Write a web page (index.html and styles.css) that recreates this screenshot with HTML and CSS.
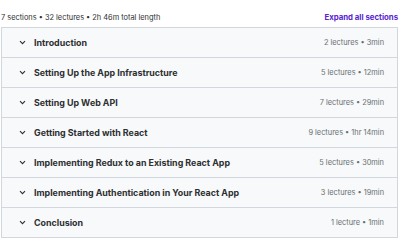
FILE: index.html
```html
<!DOCTYPE html>
<html lang="en">
<head>
    <meta charset="UTF-8">
    <title>Course content</title>
    <link rel="stylesheet" href="styles.css">
</head>
<body>
    <div class="curriculum">
        <div class="summary">
            <span class="stats">7 sections • 32 lectures • 2h 46m total length</span>
            <button class="expand">Expand all sections</button>
        </div>
        <div class="sections">
            <div class="section">
                <span class="chevron"><svg width="7" height="5" viewBox="0 0 7 5"><path d="M1 1.2l2.5 2.5 2.5-2.5" fill="none" stroke="#2d2f31" stroke-width="1.1"/></svg></span>
                <span class="title">Introduction</span>
                <span class="meta">2 lectures • 3min</span>
            </div>
            <div class="section">
                <span class="chevron"><svg width="7" height="5" viewBox="0 0 7 5"><path d="M1 1.2l2.5 2.5 2.5-2.5" fill="none" stroke="#2d2f31" stroke-width="1.1"/></svg></span>
                <span class="title">Setting Up the App Infrastructure</span>
                <span class="meta">5 lectures • 12min</span>
            </div>
            <div class="section">
                <span class="chevron"><svg width="7" height="5" viewBox="0 0 7 5"><path d="M1 1.2l2.5 2.5 2.5-2.5" fill="none" stroke="#2d2f31" stroke-width="1.1"/></svg></span>
                <span class="title">Setting Up Web API</span>
                <span class="meta">7 lectures • 29min</span>
            </div>
            <div class="section">
                <span class="chevron"><svg width="7" height="5" viewBox="0 0 7 5"><path d="M1 1.2l2.5 2.5 2.5-2.5" fill="none" stroke="#2d2f31" stroke-width="1.1"/></svg></span>
                <span class="title">Getting Started with React</span>
                <span class="meta">9 lectures • 1hr 14min</span>
            </div>
            <div class="section">
                <span class="chevron"><svg width="7" height="5" viewBox="0 0 7 5"><path d="M1 1.2l2.5 2.5 2.5-2.5" fill="none" stroke="#2d2f31" stroke-width="1.1"/></svg></span>
                <span class="title">Implementing Redux to an Existing React App</span>
                <span class="meta">5 lectures • 30min</span>
            </div>
            <div class="section">
                <span class="chevron"><svg width="7" height="5" viewBox="0 0 7 5"><path d="M1 1.2l2.5 2.5 2.5-2.5" fill="none" stroke="#2d2f31" stroke-width="1.1"/></svg></span>
                <span class="title">Implementing Authentication in Your React App</span>
                <span class="meta">3 lectures • 19min</span>
            </div>
            <div class="section">
                <span class="chevron"><svg width="7" height="5" viewBox="0 0 7 5"><path d="M1 1.2l2.5 2.5 2.5-2.5" fill="none" stroke="#2d2f31" stroke-width="1.1"/></svg></span>
                <span class="title">Conclusion</span>
                <span class="meta">1 lecture • 1min</span>
            </div>
        </div>
    </div>
</body>
</html>
```

FILE: styles.css
```css
* {
    margin: 0;
    box-sizing: border-box;
}

body {
    font-family: Inter, 'Noto Sans', sans-serif;
    color: #2d2f31;
    background: white;
}

.curriculum {
    padding: 7px 2px 0 1px;
}

.summary {
    display: flex;
    justify-content: space-between;
    align-items: center;
    height: 20px;
}

.stats {
    font-size: 7.4px;
    color: #2d2f31;
}

.expand {
    border: none;
    background: none;
    padding: 0;
    font-family: inherit;
    font-size: 7.8px;
    font-weight: 700;
    color: #5624d0;
}

.sections {
    border: 1px solid #d1d7dc;
}

.section {
    display: flex;
    align-items: center;
    height: 30px;
    padding: 0 13px 0 17px;
    background: #f7f9fa;
    border-bottom: 1px solid #d1d7dc;
}

.section:last-child {
    border-bottom: none;
    height: 29px;
}

.chevron {
    display: flex;
    width: 15px;
}

.title {
    flex: 1;
    font-size: 8.9px;
    font-weight: 700;
}

.meta {
    font-size: 7.4px;
    color: #6a6f73;
}
```
